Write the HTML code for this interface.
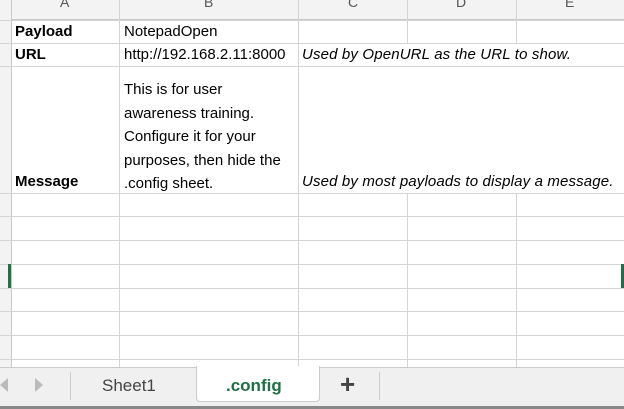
<!DOCTYPE html><html><head><style>
body{margin:0;width:624px;height:409px;overflow:hidden;background:#fff;position:relative;font-family:"Liberation Sans",sans-serif;}
.h{position:absolute;top:0;height:19px;background:#f3f3f3;border-bottom:1px solid #c8c8c8;left:0;width:624px}
.hl{position:absolute;top:0;font-size:14px;color:#555;line-height:12px}
.v{position:absolute;top:0;width:1px;height:367px;background:#d4d4d4}
.r{position:absolute;left:0;width:624px;height:1px;background:#d4d4d4}
.t{position:absolute;font-size:15px;color:#000;white-space:nowrap;line-height:18px}
b{font-weight:bold}
.i{font-style:italic;font-size:15px;letter-spacing:0.15px}
</style></head><body>
<div class="h"></div>
<div style="position:absolute;left:0;top:0;width:11px;height:367px;background:#f3f3f3"></div>
<div class="hl" style="left:60px;top:-4px">A</div>
<div class="hl" style="left:204px;top:-4px">B</div>
<div class="hl" style="left:348px;top:-4px">C</div>
<div class="hl" style="left:456px;top:-4px">D</div>
<div class="hl" style="left:565px;top:-4px">E</div>
<div class="v" style="left:11px;background:#c8c8c8"></div>
<div class="v" style="left:119px"></div>
<div class="v" style="left:298px"></div>
<div class="v" style="left:407px"></div>
<div class="v" style="left:516px"></div>
<div class="r" style="top:20px"></div>
<div class="r" style="top:43px"></div>
<div class="r" style="top:66px"></div>
<div class="r" style="top:193px"></div>
<div class="r" style="top:216px"></div>
<div class="r" style="top:240px"></div>
<div class="r" style="top:264px"></div>
<div class="r" style="top:288px"></div>
<div class="r" style="top:311px"></div>
<div class="r" style="top:335px"></div>
<div class="r" style="top:359px"></div>
<div style="position:absolute;left:300px;top:67px;width:324px;height:126px;background:#fff"></div>
<div style="position:absolute;left:299px;top:44px;width:325px;height:22px;background:#fff"></div>
<div style="position:absolute;left:8px;top:264px;width:3px;height:24px;background:#1e7145"></div>
<div style="position:absolute;left:621px;top:264px;width:3px;height:24px;background:#1e7145"></div>
<div class="t" style="left:15px;top:23px"><b>Payload</b></div>
<div class="t" style="left:124px;top:23px">NotepadOpen</div>
<div class="t" style="left:15px;top:46px"><b>URL</b></div>
<div class="t" style="left:124px;top:46px;width:174px;overflow:hidden">http://192.168.2.11:8000</div>
<div class="t i" style="left:302px;top:46px">Used by OpenURL as the URL to show.</div>
<div class="t" style="left:124px;top:78px;line-height:23.5px">This is for user<br>awareness training.<br>Configure it for your<br>purposes, then hide the<br>.config sheet.</div>
<div class="t" style="left:15px;top:173px"><b>Message</b></div>
<div class="t i" style="left:302px;top:173px">Used by most payloads to display a message.</div>
<div style="position:absolute;left:0;top:367px;width:624px;height:39px;background:#f0f0f0;border-top:1px solid #ccc"></div>
<div style="position:absolute;left:0;top:406px;width:624px;height:3px;background:#888"></div>
<div style="position:absolute;left:0;top:378px;width:0;height:0;border-top:7px solid transparent;border-bottom:7px solid transparent;border-right:8px solid #bbb"></div>
<div style="position:absolute;left:35px;top:378px;width:0;height:0;border-top:7px solid transparent;border-bottom:7px solid transparent;border-left:8px solid #bbb"></div>
<div style="position:absolute;left:70px;top:372px;width:1px;height:28px;background:#ccc"></div>
<div style="position:absolute;left:102px;top:376px;font-size:17px;color:#444">Sheet1</div>
<div style="position:absolute;left:196px;top:366px;width:122px;height:35px;background:#fff;border:1px solid #ccc;border-top:none;border-radius:0 0 4px 4px"></div>
<div style="position:absolute;left:226px;top:376px;font-size:17px;color:#1e7145;font-weight:bold">.config</div>
<div style="position:absolute;left:340px;top:369px;font-size:26px;color:#444;font-weight:bold">+</div>
<div style="position:absolute;left:379px;top:372px;width:1px;height:28px;background:#ccc"></div>
</body></html>
